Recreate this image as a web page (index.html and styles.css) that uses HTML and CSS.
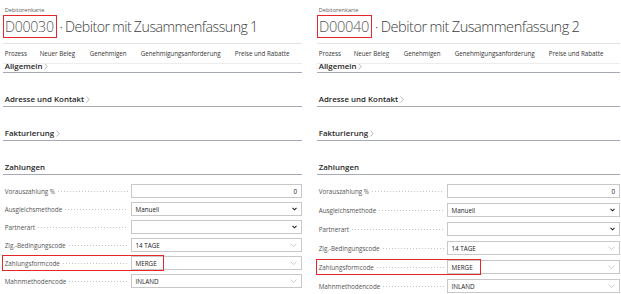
FILE: index.html
```html
<!DOCTYPE html>
<html lang="de">
<head>
<meta charset="utf-8">
<title>Debitorenkarte</title>
<link rel="stylesheet" href="styles.css">
</head>
<body>
<div class="page">
  <section class="card card-a">
    <div class="crumb">Debitorenkarte</div>
    <h1 class="title"><span class="no">D00030</span><span class="rest">&nbsp;· Debitor mit Zusammenfassung 1</span></h1>
    <nav class="actions">
      <span>Prozess</span><span>Neuer Beleg</span><span>Genehmigen</span><span>Genehmigungsanforderung</span><span>Preise und Rabatte</span>
    </nav>
    <div class="tab tab-clip"><span class="tab-text">Allgemein<svg class="more" viewBox="0 0 4 7"><path d="M0.5 0.5 L3.2 3.5 L0.5 6.5"/></svg></span></div>
    <div class="tab"><span class="tab-text">Adresse und Kontakt<svg class="more" viewBox="0 0 4 7"><path d="M0.5 0.5 L3.2 3.5 L0.5 6.5"/></svg></span></div>
    <div class="tab"><span class="tab-text">Fakturierung<svg class="more" viewBox="0 0 4 7"><path d="M0.5 0.5 L3.2 3.5 L0.5 6.5"/></svg></span></div>
    <div class="tab"><span class="tab-text">Zahlungen</span></div>
    <div class="fields">
      <div class="field"><span class="label">Vorauszahlung %</span><span class="dots"></span><div class="box num">0</div></div>
      <div class="field"><span class="label">Ausgleichsmethode</span><span class="dots"></span><div class="box">Manuell<svg class="sel" viewBox="0 0 6 4"><path d="M0.6 0.6 L3 3 L5.4 0.6"/></svg></div></div>
      <div class="field"><span class="label">Partnerart</span><span class="dots"></span><div class="box"><svg class="sel" viewBox="0 0 6 4"><path d="M0.6 0.6 L3 3 L5.4 0.6"/></svg></div></div>
      <div class="field"><span class="label">Zlg.-Bedingungscode</span><span class="dots"></span><div class="box">14 TAGE<svg class="look" viewBox="0 0 8 5"><path d="M0.5 0.5 L4 4 L7.5 0.5"/></svg></div></div>
      <div class="field marked"><span class="label">Zahlungsformcode</span><span class="dots"></span><div class="box">MERGE<svg class="look" viewBox="0 0 8 5"><path d="M0.5 0.5 L4 4 L7.5 0.5"/></svg></div><span class="mark"></span></div>
      <div class="field"><span class="label">Mahnmethodencode</span><span class="dots"></span><div class="box">INLAND<svg class="look" viewBox="0 0 8 5"><path d="M0.5 0.5 L4 4 L7.5 0.5"/></svg></div></div>
    </div>
  </section>

  <section class="card card-b">
    <div class="crumb">Debitorenkarte</div>
    <h1 class="title"><span class="no">D00040</span><span class="rest">&nbsp;· Debitor mit Zusammenfassung 2</span></h1>
    <nav class="actions">
      <span>Prozess</span><span>Neuer Beleg</span><span>Genehmigen</span><span>Genehmigungsanforderung</span><span>Preise und Rabatte</span>
    </nav>
    <div class="tab tab-clip"><span class="tab-text">Allgemein<svg class="more" viewBox="0 0 4 7"><path d="M0.5 0.5 L3.2 3.5 L0.5 6.5"/></svg></span></div>
    <div class="tab"><span class="tab-text">Adresse und Kontakt<svg class="more" viewBox="0 0 4 7"><path d="M0.5 0.5 L3.2 3.5 L0.5 6.5"/></svg></span></div>
    <div class="tab"><span class="tab-text">Fakturierung<svg class="more" viewBox="0 0 4 7"><path d="M0.5 0.5 L3.2 3.5 L0.5 6.5"/></svg></span></div>
    <div class="tab"><span class="tab-text">Zahlungen</span></div>
    <div class="fields">
      <div class="field"><span class="label">Vorauszahlung %</span><span class="dots"></span><div class="box num">0</div></div>
      <div class="field"><span class="label">Ausgleichsmethode</span><span class="dots"></span><div class="box">Manuell<svg class="sel" viewBox="0 0 6 4"><path d="M0.6 0.6 L3 3 L5.4 0.6"/></svg></div></div>
      <div class="field"><span class="label">Partnerart</span><span class="dots"></span><div class="box"><svg class="sel" viewBox="0 0 6 4"><path d="M0.6 0.6 L3 3 L5.4 0.6"/></svg></div></div>
      <div class="field"><span class="label">Zlg.-Bedingungscode</span><span class="dots"></span><div class="box">14 TAGE<svg class="look" viewBox="0 0 8 5"><path d="M0.5 0.5 L4 4 L7.5 0.5"/></svg></div></div>
      <div class="field marked"><span class="label">Zahlungsformcode</span><span class="dots"></span><div class="box">MERGE<svg class="look" viewBox="0 0 8 5"><path d="M0.5 0.5 L4 4 L7.5 0.5"/></svg></div><span class="mark"></span></div>
      <div class="field"><span class="label">Mahnmethodencode</span><span class="dots"></span><div class="box">INLAND<svg class="look" viewBox="0 0 8 5"><path d="M0.5 0.5 L4 4 L7.5 0.5"/></svg></div></div>
    </div>
  </section>
</div>
</body>
</html>
```

FILE: styles.css
```css
* { box-sizing: border-box; }

html, body {
  margin: 0;
  padding: 0;
  background: #ffffff;
}

body {
  width: 621px;
  height: 294px;
  overflow: hidden;
  font-family: "Open Sans", "Noto Sans", "Liberation Sans", sans-serif;
  color: #333;
}

.page {
  display: flex;
  align-items: flex-start;
}

.card {
  display: flex;
  flex-direction: column;
}

.card-a {
  margin-left: 3px;
  width: 299px;
  --label-col: 128px;
  --mark-extra: 33px;
  --row-gap: 4px;
  --title-size: 14.2px;
}

.card-b {
  margin-left: 15px;
  width: 303px;
  --label-col: 130px;
  --mark-extra: 34px;
  --row-gap: 5px;
  --title-size: 14.6px;
}

.crumb {
  font-size: 5.6px;
  line-height: 10px;
  padding-top: 5px;
  padding-left: 1.7px;
  color: #5a5a5a;
}

.title {
  margin: 0;
  display: flex;
  align-items: center;
  height: 23px;
  font-size: var(--title-size);
  line-height: 21px;
  font-weight: 300;
  color: #3c3c3c;
  letter-spacing: -0.5px;
  word-spacing: -0.5px;
  white-space: nowrap;
}

.no {
  height: 23px;
  border: 1px solid #e5262b;
  padding: 0 2px 0 1px;
  color: #555;
  letter-spacing: -0.3px;
}

.actions {
  margin-top: 5px;
  display: flex;
  height: 21px;
  align-items: center;
  border-top: 1px solid #e3e3e3;
  border-bottom: 1px solid #ececec;
  font-size: 6.2px;
  color: #333;
  white-space: nowrap;
}

.actions span { padding-left: 1.7px; }
.actions span:nth-child(1) { width: 35px; }
.actions span:nth-child(2) { width: 50px; }
.actions span:nth-child(3) { width: 51px; }
.actions span:nth-child(4) { width: 94px; }

.tab {
  height: 34px;
  display: flex;
  align-items: flex-end;
  padding-bottom: 2px;
  padding-left: 1.7px;
  border-bottom: 1px solid #a6aab4;
  overflow: hidden;
}

.tab-clip {
  height: 9px;
  padding-bottom: 1px;
}

.tab-text {
  display: inline-flex;
  align-items: center;
  font-size: 7.9px;
  line-height: 10px;
  font-weight: 600;
  color: #262626;
  white-space: nowrap;
}

.more {
  width: 4px;
  height: 7px;
  margin-left: 1.5px;
  fill: none;
  stroke: #9a9a9a;
  stroke-width: 0.7;
}

.fields {
  display: flex;
  flex-direction: column;
  gap: var(--row-gap);
  padding-top: 9px;
}

.field {
  position: relative;
  display: grid;
  grid-template-columns: auto minmax(0, 1fr) calc(100% - var(--label-col));
  align-items: center;
  height: 14px;
}

.label {
  padding-left: 1.7px;
  font-size: 6.3px;
  color: #555;
  white-space: nowrap;
}

.dots {
  height: 1px;
  margin: 1px 3px 0 3px;
  background-image: linear-gradient(to right, #c4c4c4 1px, transparent 1px);
  background-size: 3px 1px;
  background-repeat: repeat-x;
}

.box {
  height: 14px;
  border: 1px solid #c8c8c8;
  background: #fff;
  display: flex;
  align-items: center;
  justify-content: space-between;
  padding: 0 4px 0 3.5px;
  font-size: 6.3px;
  color: #222;
}

.box.num { justify-content: flex-end; }

.sel {
  width: 5px;
  height: 4px;
  fill: none;
  stroke: #222;
  stroke-width: 1.3;
  margin-left: auto;
}

.look {
  width: 7px;
  height: 4.5px;
  fill: none;
  stroke: #a0a0a0;
  stroke-width: 0.6;
  margin-left: auto;
}

.mark {
  position: absolute;
  left: -1px;
  top: -1px;
  bottom: -1px;
  width: calc(var(--label-col) + var(--mark-extra) + 1px);
  border: 1px solid #e5262b;
  pointer-events: none;
}
```
